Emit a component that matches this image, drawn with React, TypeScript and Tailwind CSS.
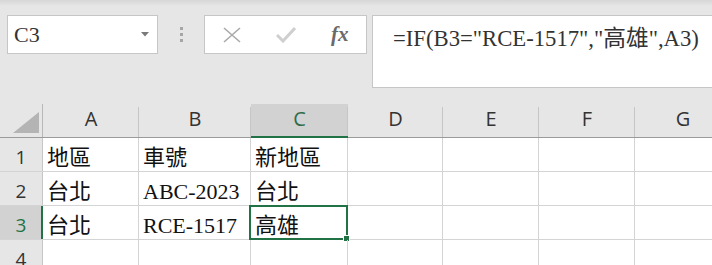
const serif = "font-['Liberation_Serif','Noto_Sans_CJK_TC',serif]";

const cols = [
  { key: "A", w: "w-[96px]" },
  { key: "B", w: "w-[112px]" },
  { key: "C", w: "w-[97px]" },
  { key: "D", w: "w-[95px]" },
  { key: "E", w: "w-[96px]" },
  { key: "F", w: "w-[96px]" },
  { key: "G", w: "w-[96px]" },
];

const rows: string[][] = [
  ["地區", "車號", "新地區"],
  ["台北", "ABC-2023", "台北"],
  ["台北", "RCE-1517", "高雄"],
  [],
];

function NameBox() {
  return (
    <div className="flex h-[39px] w-[151px] shrink-0 items-center justify-between border border-[#c6c6c6] bg-white pl-[6px] pr-[8px]">
      <span className={`${serif} text-[22px] leading-none text-[#333]`}>C3</span>
      <svg width="8" height="5" viewBox="0 0 8 5">
        <polygon points="0,0 8,0 4,4.5" fill="#7a7a7a" />
      </svg>
    </div>
  );
}

function FxBox() {
  return (
    <div className="flex h-[39px] w-[163px] shrink-0 items-center border border-[#c6c6c6] bg-white">
      <svg className="ml-[17px]" width="20" height="16" viewBox="0 0 20 16">
        <path d="M2 1 L18 15 M18 1 L2 15" stroke="#a9a9a9" strokeWidth="1.6" fill="none" />
      </svg>
      <svg className="ml-[34px]" width="20" height="16" viewBox="0 0 20 16">
        <path d="M1 8 L7 14 L19 1" stroke="#cfcfcf" strokeWidth="3" fill="none" />
      </svg>
      <span className="ml-[35px] font-['Liberation_Serif',serif] text-[21px] font-bold italic leading-none text-[#6a6a6a]">
        fx
      </span>
    </div>
  );
}

export default function App() {
  return (
    <div className="relative h-[265px] w-[712px] overflow-hidden bg-[#e6e6e6]">
      <div className="h-[6px] bg-gradient-to-b from-[#d6d6d6] to-[#e6e6e6]" />
      <div className="mt-[9px] flex items-start pl-[7px]">
        <NameBox />
        <div className="flex w-[46px] shrink-0 flex-col items-center gap-[3px] pt-[12px]">
          <span className="h-[3px] w-[3px] bg-[#a6a6a6]" />
          <span className="h-[3px] w-[3px] bg-[#a6a6a6]" />
          <span className="h-[3px] w-[3px] bg-[#a6a6a6]" />
        </div>
        <FxBox />
        <div
          className={`ml-[5px] h-[73px] w-[350px] shrink-0 whitespace-nowrap border border-[#c6c6c6] bg-white pl-[20px] pt-[12px] ${serif} text-[22.7px] leading-none text-[#333]`}
        >
          =IF(B3="RCE-1517","高雄",A3)
        </div>
      </div>

      <div className="mt-[16px] font-['Open_Sans',sans-serif]">
        <div className="flex h-[34px] border-b border-[#9b9b9b]">
          <div className="relative h-full w-[43px] shrink-0 border-r border-[#b8b8b8]">
            <svg className="absolute bottom-[4px] right-[3px]" width="26" height="21" viewBox="0 0 26 21">
              <polygon points="26,0 26,21 0,21" fill="#b4b4b4" />
            </svg>
          </div>
          {cols.map((c) => (
            <div
              key={c.key}
              className={`relative flex h-full shrink-0 items-center justify-center pb-[3px] text-[20px] ${c.w} ${
                c.key === "C" ? "bg-[#d2d2d2] text-[#2f6b4a]" : "text-[#333]"
              }`}
            >
              {c.key}
              <span className="absolute right-0 top-[3px] bottom-0 w-px bg-[#c6c6c6]" />
              {c.key === "C" && <span className="absolute -bottom-px left-0 right-0 h-[2px] bg-[#217346]" />}
            </div>
          ))}
        </div>

        {rows.map((r, i) => (
          <div key={i} className="flex h-[34px] border-b border-[#d4d4d4] bg-white">
            <div
              className={`relative flex h-full w-[43px] shrink-0 items-center justify-center pt-[5px] text-[19px] ${
                i === 2 ? "bg-[#d2d2d2] text-[#217346]" : "bg-[#e6e6e6] text-[#333]"
              } border-r ${i === 2 ? "border-[#217346]" : "border-[#c6c6c6]"}`}
            >
              {i + 1}
              {i === 2 && <span className="absolute -right-px top-0 bottom-0 w-[2px] bg-[#217346]" />}
            </div>
            {cols.map((c, j) => (
              <div
                key={c.key}
                className={`relative flex h-full shrink-0 items-end whitespace-nowrap border-r border-[#d4d4d4] pb-[2px] pl-[4px] ${serif} text-[22px] leading-none text-[#111] ${c.w}`}
              >
                {r[j] ?? ""}
                {i === 2 && c.key === "C" && (
                  <span className="absolute -left-[2px] -top-[1px] -bottom-[1px] right-[-1px] border-2 border-[#217346]">
                    <span className="absolute -bottom-[4px] -right-[4px] h-[7px] w-[7px] border border-white bg-[#217346]" />
                  </span>
                )}
              </div>
            ))}
          </div>
        ))}
      </div>
    </div>
  );
}
